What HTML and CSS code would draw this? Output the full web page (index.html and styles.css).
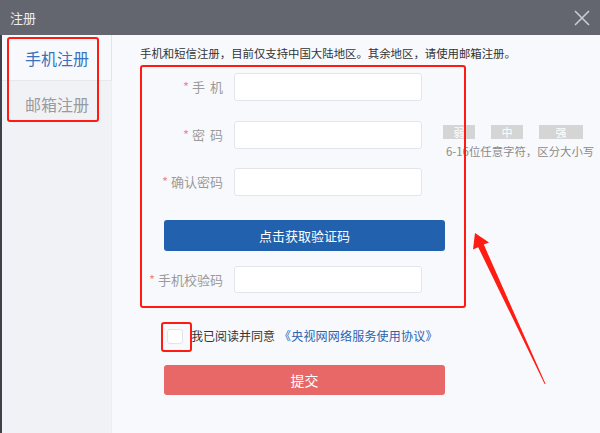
FILE: index.html
```html
<!DOCTYPE html>
<html lang="zh-CN">
<head>
<meta charset="utf-8">
<title>注册</title>
<link rel="stylesheet" href="styles.css">
</head>
<body>
<div class="dialog">
  <header class="titlebar">
    <span class="title">注册</span>
    <svg class="close" width="16" height="16" viewBox="0 0 16 16"><path d="M1 1L15 15M15 1L1 15" stroke="#c9ccd1" stroke-width="1.6" fill="none"/></svg>
  </header>
  <div class="body">
    <aside class="sidebar">
      <div class="tab active">手机注册</div>
      <div class="tab">邮箱注册</div>
    </aside>
    <main class="content">
      <p class="notice">手机和短信注册，目前仅支持中国大陆地区。其余地区，请使用邮箱注册。</p>
      <div class="form">
        <div class="row r1">
          <label class="label"><span class="star">*</span><span class="spaced">手机</span></label>
          <div class="input"></div>
        </div>
        <div class="row r2">
          <label class="label"><span class="star">*</span><span class="spaced">密码</span></label>
          <div class="input"></div>
          <div class="strength">
            <div class="bars"><span class="bar">弱</span><span class="bar">中</span><span class="bar wide">强</span></div>
            <div class="hint">6-16位任意字符，区分大小写</div>
          </div>
        </div>
        <div class="row r3">
          <label class="label"><span class="star">*</span>确认密码</label>
          <div class="input"></div>
        </div>
        <div class="btn blue">点击获取验证码</div>
        <div class="row r4">
          <label class="label"><span class="star">*</span>手机校验码</label>
          <div class="input"></div>
        </div>
      </div>
      <div class="agree">
        <span class="checkbox"></span>
        <span class="agree-text">我已阅读并同意</span>
        <span class="link">《央视网网络服务使用协议》</span>
      </div>
      <div class="btn red">提交</div>
    </main>
  </div>
  <div class="mark mark-tabs"></div>
  <div class="mark mark-form"></div>
  <div class="mark mark-check"></div>
  <svg class="arrow" width="600" height="433" viewBox="0 0 600 433">
    <polygon points="475,233 489,242.5 483.8,244.6 545.6,384 544.6,384 478.2,247.2 473,249.5" fill="#ff1c12"/>
  </svg>
</div>
</body>
</html>
```

FILE: styles.css
```css
* { box-sizing: border-box; }
html, body { margin: 0; padding: 0; }
body {
  width: 600px;
  height: 433px;
  overflow: hidden;
  background: #f8f9fc;
  font-family: "Noto Sans CJK SC", "Noto Sans", sans-serif;
}
.dialog {
  position: relative;
  width: 600px;
  height: 433px;
  display: flex;
  flex-direction: column;
  background: #f8f9fc;
}
.titlebar {
  height: 35px;
  flex: none;
  background: #63666f;
  display: flex;
  align-items: center;
  justify-content: space-between;
  padding: 0 9px 0 10px;
}
.title {
  color: #eceef1;
  font-size: 13px;
  line-height: 16px;
}
.close { display: block; margin-right: 1px; }
.body {
  flex: 1;
  display: flex;
  border-left: 2px solid #3e4148;
}
.sidebar {
  width: 110px;
  flex: none;
  background: #f1f2f5;
  border-right: 1px solid #eceef1;
}
.tab {
  height: 46px;
  display: flex;
  align-items: center;
  justify-content: center;
  font-size: 16px;
  color: #9a9a9d;
  padding-left: 1px;
}
.tab.active {
  color: #3a72bd;
  background: #f8f9fc;
  border-bottom: 1px solid #e6e8eb;
  border-right: 1px solid #e2e4e8;
  margin-right: -1px;
}
.content {
  flex: 1;
  padding: 10px 0 0 28px;
}
.notice {
  margin: 0;
  font-size: 11.4px;
  line-height: 16px;
  color: #333;
  white-space: nowrap;
}
.form { display: flex; flex-direction: column; }
.row {
  display: flex;
  align-items: center;
  height: 28px;
}
.r1 { margin-top: 12px; }
.r2 { margin-top: 20px; align-items: flex-start; }
.r3 { margin-top: 19px; }
.r4 { margin-top: 15px; height: 27px; }
.label {
  width: 83px;
  flex: none;
  text-align: right;
  font-size: 13px;
  line-height: 16px;
  color: #9b9b9b;
  margin-right: 11px;
}
.r2 .label { margin-top: 6px; }
.star {
  color: #f28a8a;
  margin-right: 3px;
  font-size: 13px;
}
.spaced { letter-spacing: 5px; margin-right: -5px; }
.input {
  width: 188px;
  height: 100%;
  background: #fff;
  border: 1px solid #e3e5ea;
  border-radius: 3px;
  flex: none;
}
.strength {
  margin-left: 21px;
  margin-top: 4px;
  width: 160px;
  flex: none;
}
.bars { display: flex; gap: 16px; }
.bar {
  width: 32px;
  height: 14px;
  background: #d5d5d6;
  color: #fff;
  font-size: 11px;
  line-height: 14px;
  text-align: center;
}
.bar.wide { width: 44px; }
.hint {
  margin-top: 6px;
  margin-left: 3px;
  font-size: 11.4px;
  line-height: 12px;
  color: #8a8a8a;
  white-space: nowrap;
}
.btn {
  margin-left: 24px;
  width: 281px;
  display: flex;
  align-items: center;
  justify-content: center;
  border-radius: 3px;
  color: #fff;
}
.btn.blue {
  margin-top: 24px;
  height: 31px;
  background: #2161ad;
  font-size: 13px;
}
.btn.red {
  margin-top: 21px;
  height: 30px;
  background: #e86868;
  font-size: 14px;
}
.agree {
  margin-top: 35px;
  padding-left: 27px;
  display: flex;
  align-items: center;
  height: 16px;
  font-size: 12px;
  line-height: 16px;
  white-space: nowrap;
}
.checkbox {
  width: 16px;
  height: 15px;
  background: #fff;
  border: 1px solid #e2e4e8;
  border-radius: 3px;
  margin-right: 8px;
}
.agree-text { color: #333; margin-right: 4px; }
.link { color: #2a62ae; letter-spacing: 0.2px; }
.mark {
  position: absolute;
  border: 2px solid #ff1a12;
  border-radius: 3px;
}
.mark-tabs { left: 7px; top: 37px; width: 92px; height: 85px; }
.mark-form { left: 140px; top: 65px; width: 326px; height: 243px; }
.mark-check { left: 161px; top: 322px; width: 31px; height: 30px; }
.arrow { position: absolute; left: 0; top: 0; }
```
